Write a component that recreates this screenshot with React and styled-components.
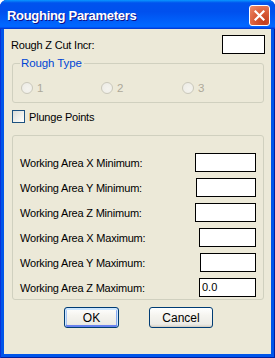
import React from "react";
import styled, { createGlobalStyle } from "styled-components";

const Global = createGlobalStyle`
  html, body { margin: 0; padding: 0; background: #ffffff; }
  body { font-family: "Liberation Sans", Arial, sans-serif; font-size: 11px; }
  * { box-sizing: border-box; }
`;

const Window = styled.div`
  width: 275px;
  height: 358px;
  display: flex;
  flex-direction: column;
  background: #0055ea;
  border-radius: 7px 7px 0 0;
  box-shadow: inset 1px 0 0 #0831d9, inset -1px 0 0 #001ea0, inset 0 -1px 0 #001ea0;
  overflow: hidden;
`;

const TitleBar = styled.div`
  height: 29px;
  flex: none;
  display: flex;
  align-items: center;
  justify-content: space-between;
  padding: 0 5px 0 7px;
  background: linear-gradient(
    180deg,
    #0997ff 0%,
    #0053ee 10%,
    #0050ee 40%,
    #0066ff 86%,
    #0066ff 92%,
    #005bff 94%,
    #003dd7 97%,
    #003dd7 100%
  );
`;

const Title = styled.span`
  color: #ffffff;
  font-family: "Liberation Sans", Arial, sans-serif;
  font-weight: bold;
  font-size: 13px;
  letter-spacing: -0.3px;
  text-shadow: 1px 1px 0 #0f1089;
  margin-top: 1px;
`;

const CloseButton = styled.div`
  width: 21px;
  height: 21px;
  border: 1px solid #ffffff;
  border-radius: 3px;
  background: radial-gradient(circle at 75% 85%, #c23d1c 0%, #d85a36 45%, #ee8c6c 100%);
  display: flex;
  align-items: center;
  justify-content: center;
  margin-top: 1px;
`;

const Client = styled.div`
  flex: 1;
  margin: 0 4px 4px 4px;
  background: #ece9d8;
  padding: 6px 7px 0 8px;
  display: flex;
  flex-direction: column;
`;

const TopRow = styled.div`
  display: flex;
  align-items: center;
  justify-content: space-between;
  height: 19px;
  margin: 0 -1px 0 -1px;
`;

const Label = styled.span`
  color: #000000;
  font-size: 11px;
  letter-spacing: -0.2px;
  white-space: nowrap;
`;

const TextBox = styled.div`
  width: ${(p) => p.$w}px;
  height: 19px;
  background: #ffffff;
  border: 1px solid #000000;
  font-size: 11px;
  color: #000;
  padding: 2px 0 0 2px;
  line-height: 13px;
`;

const GroupBox = styled.fieldset`
  margin: ${(p) => p.$mt}px 0 0 0;
  padding: ${(p) => p.$pad};
  border: 1px solid #d0d0bf;
  border-radius: 3px;
  min-width: 0;
`;

const Legend = styled.legend`
  color: #0046d5;
  font-size: 11.5px;
  line-height: 13px;
  height: 13px;
  padding: 0 2px 0 1px;
  margin-left: -1px;
  letter-spacing: -0.1px;
`;

const RadioRow = styled.div`
  display: grid;
  grid-template-columns: 80px 81px 80px;
  margin-top: 12px;
  height: 12px;
`;

const RadioItem = styled.div`
  display: flex;
  align-items: center;
  gap: 4px;
  color: #aca899;
  font-size: 11.5px;
`;

const RadioCircle = styled.span`
  width: 12px;
  height: 12px;
  border-radius: 50%;
  border: 1px solid #cac8bb;
  background: radial-gradient(circle at 60% 60%, #f4f3ee 0%, #ecebe4 100%);
  flex: none;
`;

const CheckRow = styled.div`
  display: flex;
  align-items: center;
  gap: 4px;
  margin-top: 7px;
  height: 13px;
`;

const CheckBox = styled.span`
  width: 13px;
  height: 13px;
  border: 1px solid #1c5180;
  background: linear-gradient(135deg, #dcdcd7 0%, #f2f2ee 60%, #ffffff 100%);
  flex: none;
`;

const FieldList = styled.div`
  display: flex;
  flex-direction: column;
  gap: 6px;
`;

const FieldRow = styled.div`
  display: flex;
  align-items: center;
  justify-content: space-between;
  height: 19px;
`;

const ButtonRow = styled.div`
  display: flex;
  justify-content: center;
  gap: 30px;
  margin-top: 7px;
  padding-left: 1px;
`;

const Button = styled.div`
  width: ${(p) => p.$w}px;
  height: 21px;
  border: 1px solid #003c74;
  border-radius: 3px;
  background: linear-gradient(180deg, #ffffff 0%, #f5f4ef 40%, #ecebe6 85%, #d6d0c5 100%);
  display: flex;
  align-items: center;
  justify-content: center;
  font-size: 12px;
  color: #000;
  box-shadow: ${(p) =>
    p.$default
      ? "inset 0 1px 0 1px #cee7ff, inset 0 -1px 0 1px #6982ee, inset 1px 0 0 1px #aac6f4, inset -1px 0 0 1px #8aaaf0"
      : "inset 0 -1px 0 #d6d0c5"};
`;

const fields = [
  { label: "Working Area X Minimum:", w: 61 },
  { label: "Working Area Y Minimum:", w: 60 },
  { label: "Working Area Z Minimum:", w: 61 },
  { label: "Working Area X Maximum:", w: 57 },
  { label: "Working Area Y Maximum:", w: 56 },
  { label: "Working Area Z Maximum:", w: 57, value: "0.0" },
];

export default function App() {
  return (
    <>
      <Global />
      <Window>
        <TitleBar>
          <Title>Roughing Parameters</Title>
          <CloseButton>
            <svg width="11" height="11" viewBox="0 0 11 11">
              <path d="M1.5 1.5 L9.5 9.5 M9.5 1.5 L1.5 9.5" stroke="#ffffff" strokeWidth="2.2" strokeLinecap="square" />
            </svg>
          </CloseButton>
        </TitleBar>
        <Client>
          <TopRow>
            <Label>Rough Z Cut Incr:</Label>
            <TextBox $w={43} />
          </TopRow>
          <GroupBox $mt={3} $pad="0 0 8px 8px">
            <Legend>Rough Type</Legend>
            <RadioRow>
              {["1", "2", "3"].map((n) => (
                <RadioItem key={n}>
                  <RadioCircle />
                  {n}
                </RadioItem>
              ))}
            </RadioRow>
          </GroupBox>
          <CheckRow>
            <CheckBox />
            <Label>Plunge Points</Label>
          </CheckRow>
          <GroupBox $mt={12} $pad="17px 7px 2px 7px">
            <FieldList>
              {fields.map((f) => (
                <FieldRow key={f.label}>
                  <Label>{f.label}</Label>
                  <TextBox $w={f.w}>{f.value}</TextBox>
                </FieldRow>
              ))}
            </FieldList>
          </GroupBox>
          <ButtonRow>
            <Button $w={55} $default>OK</Button>
            <Button $w={64}>Cancel</Button>
          </ButtonRow>
        </Client>
      </Window>
    </>
  );
}
